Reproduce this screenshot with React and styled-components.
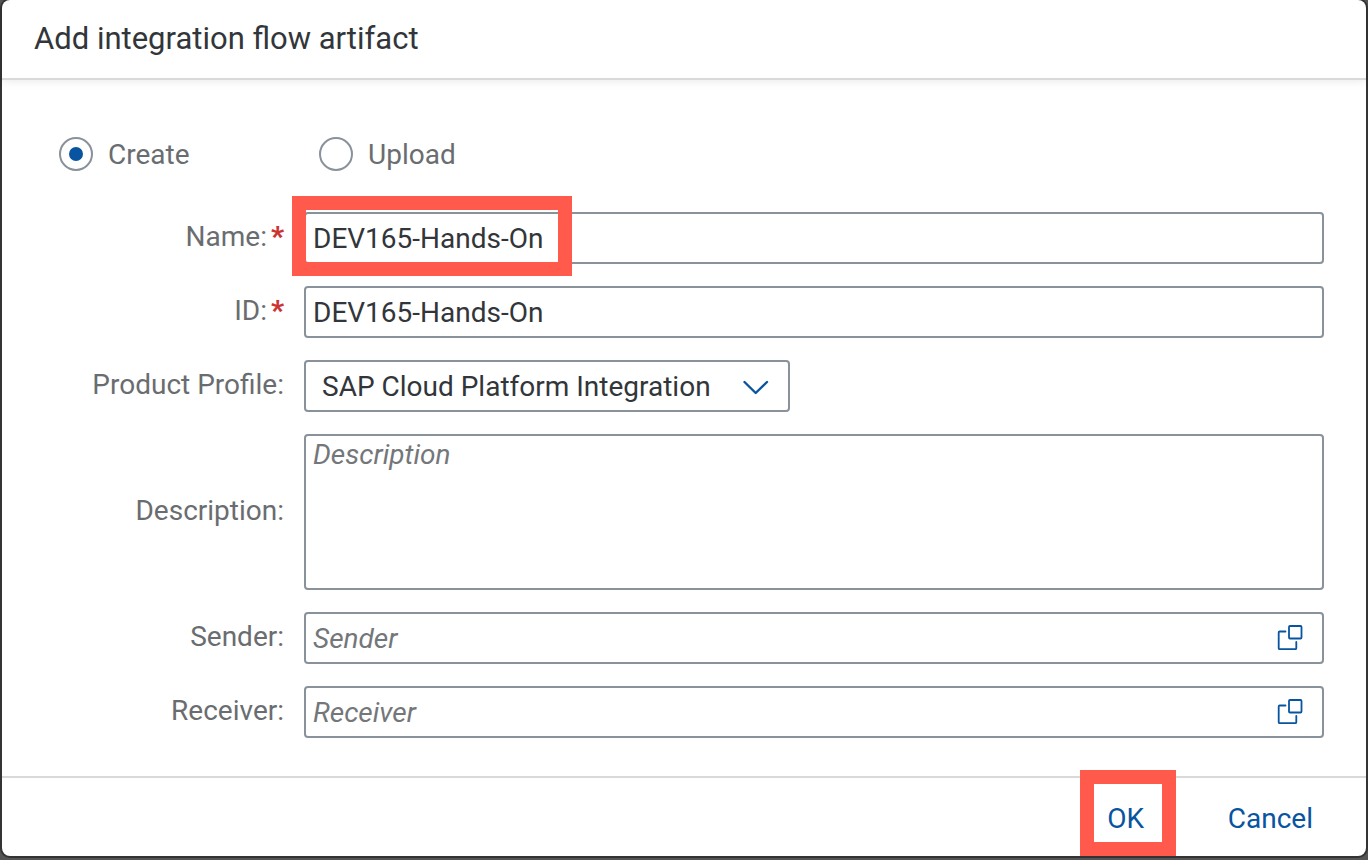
import React, { useState } from "react";
import styled, { createGlobalStyle, css } from "styled-components";

const colors = {
  text: "#32363a",
  label: "#6a6d70",
  placeholder: "#74777a",
  border: "#89919a",
  line: "#d9d9d9",
  brand: "#0854a0",
  required: "#cc3333",
  mark: "#ff5a4c",
};

const GlobalStyle = createGlobalStyle`
  *, *::before, *::after { box-sizing: border-box; }
  body {
    margin: 0;
    background: #555555;
    color: ${colors.text};
    font-family: Roboto, "Liberation Sans", sans-serif;
    font-size: 28px;
    line-height: 36px;
  }
  input, select, textarea, button { font: inherit; color: inherit; margin: 0; }
`;

const Backdrop = styled.div`
  min-height: 100vh;
  padding: 0 2px 4px;
  display: flex;
`;

const Dialog = styled.form`
  flex: 1;
  min-width: 0;
  display: flex;
  flex-direction: column;
  background: #ffffff;
  border-radius: 8px;
  box-shadow: 0 0 0 2px #333333;
`;

const Header = styled.header`
  height: 80px;
  padding: 0 32px;
  display: flex;
  align-items: center;
  border-bottom: 2px solid ${colors.line};
  box-shadow: 0 2px 8px rgba(0, 0, 0, 0.08);
`;

const Title = styled.h1`
  margin: 0;
  font-size: 31px;
  line-height: 40px;
  font-weight: 400;
`;

const Body = styled.main`
  flex: 1;
  padding: 56px 42px 38px;
`;

const labelColumns = css`
  display: grid;
  grid-template-columns: 240px minmax(0, 1fr);
  column-gap: 20px;
`;

const Modes = styled.div`
  ${labelColumns}
  margin-bottom: 40px;
`;

const Mode = styled.label`
  display: flex;
  align-items: center;
  gap: 15px;
  padding-left: 15px;
  color: ${colors.label};
`;

const Radio = styled.input.attrs({ type: "radio" })`
  appearance: none;
  width: 34px;
  height: 34px;
  border: 2px solid ${colors.border};
  border-radius: 50%;
  display: grid;
  place-items: center;
  &:checked::before {
    content: "";
    width: 14px;
    height: 14px;
    border-radius: 50%;
    background: ${colors.brand};
  }
`;

const ModeText = styled.span`
  padding-top: 2px;
  line-height: 34px;
`;

const Fields = styled.div`
  display: grid;
  gap: 22px;
`;

const Row = styled.div`
  ${labelColumns}
  align-items: center;
`;

const Label = styled.label`
  display: flex;
  justify-content: flex-end;
  padding-bottom: 2px;
  color: ${colors.label};
  white-space: nowrap;
`;

const Required = styled.span`
  padding-left: 4px;
  color: ${colors.required};
  font-family: Roboto, sans-serif;
  font-weight: 900;
`;

const Control = styled.div`
  position: relative;
  display: flex;
`;

const box = css`
  border: 2px solid ${colors.border};
  border-radius: 4px;
  background: #ffffff;
  outline: none;
  &::placeholder {
    color: ${colors.placeholder};
    font-style: italic;
    opacity: 1;
  }
`;

const TextBox = styled.input.attrs({ type: "text" })`
  ${box}
  width: 100%;
  height: 52px;
  padding: 0 ${(p) => (p.$withHelp ? 64 : 7)}px 0 7px;
`;

const TextArea = styled.textarea`
  ${box}
  width: 100%;
  height: 156px;
  padding: 1px 7px;
  resize: none;
`;

const SelectFrame = styled.div`
  position: relative;
  width: 486px;
  max-width: 100%;
`;

const Select = styled.select`
  ${box}
  appearance: none;
  width: 100%;
  height: 52px;
  padding: 1px 56px 0 16px;
`;

const Arrow = styled.svg`
  position: absolute;
  right: 20px;
  top: 18px;
  pointer-events: none;
`;

const HelpButton = styled.button.attrs({ type: "button" })`
  position: absolute;
  right: 2px;
  top: 2px;
  width: 64px;
  height: 48px;
  padding: 0;
  border: 0;
  background: none;
  display: grid;
  place-items: center;
`;

const Mark = styled.span`
  position: absolute;
  border: 14px solid ${colors.mark};
  pointer-events: none;
`;

const NameMark = styled(Mark)`
  left: -12px;
  top: -16px;
  width: 280px;
  height: 80px;
`;

const OkMark = styled(Mark)`
  inset: -8px 0 0;
`;

const Footer = styled.footer`
  height: 80px;
  padding-right: 33px;
  display: flex;
  justify-content: flex-end;
  gap: 36px;
  border-top: 2px solid ${colors.line};
`;

const Action = styled.button`
  position: relative;
  min-width: 96px;
  height: 78px;
  padding: 4px 20px 0 16px;
  border: 0;
  background: none;
  color: ${colors.brand};
`;

function ValueHelp({ label }) {
  return (
    <HelpButton aria-label={label}>
      <svg width="28" height="28" viewBox="0 0 28 28" fill="none" stroke={colors.brand} strokeWidth="1.8" strokeLinejoin="round" strokeLinecap="round" aria-hidden="true">
        <rect x="13" y="2" width="12.5" height="12.5" rx="1" />
        <path d="M9.5 7.5H3.7Q2.7 7.5 2.7 8.5V24.2Q2.7 25.2 3.7 25.2H19.3Q20.3 25.2 20.3 24.2V18" />
      </svg>
    </HelpButton>
  );
}

function Field({ id, label, required, children }) {
  return (
    <Row>
      <Label htmlFor={id}>
        {label}:{required && <Required>*</Required>}
      </Label>
      <Control>{children}</Control>
    </Row>
  );
}

export default function App() {
  const [mode, setMode] = useState("create");

  return (
    <>
      <GlobalStyle />
      <Backdrop>
        <Dialog onSubmit={(e) => e.preventDefault()}>
          <Header>
            <Title>Add integration flow artifact</Title>
          </Header>
          <Body>
            <Modes>
              <Mode>
                <Radio name="mode" checked={mode === "create"} onChange={() => setMode("create")} />
                <ModeText>Create</ModeText>
              </Mode>
              <Mode>
                <Radio name="mode" checked={mode === "upload"} onChange={() => setMode("upload")} />
                <ModeText>Upload</ModeText>
              </Mode>
            </Modes>
            <Fields>
              <Field id="name" label="Name" required>
                <TextBox id="name" defaultValue="DEV165-Hands-On" />
                <NameMark />
              </Field>
              <Field id="artifact-id" label="ID" required>
                <TextBox id="artifact-id" defaultValue="DEV165-Hands-On" />
              </Field>
              <Field id="profile" label="Product Profile">
                <SelectFrame>
                  <Select id="profile">
                    <option>SAP Cloud Platform Integration</option>
                  </Select>
                  <Arrow width="28" height="18" viewBox="0 0 28 18" fill="none" stroke={colors.brand} strokeWidth="2.4" strokeLinecap="round" strokeLinejoin="round" aria-hidden="true">
                    <path d="M2.5 4L13.7 15L25 4" />
                  </Arrow>
                </SelectFrame>
              </Field>
              <Field id="description" label="Description">
                <TextArea id="description" placeholder="Description" />
              </Field>
              <Field id="sender" label="Sender">
                <TextBox id="sender" placeholder="Sender" $withHelp />
                <ValueHelp label="Select sender" />
              </Field>
              <Field id="receiver" label="Receiver">
                <TextBox id="receiver" placeholder="Receiver" $withHelp />
                <ValueHelp label="Select receiver" />
              </Field>
            </Fields>
          </Body>
          <Footer>
            <Action type="submit">
              OK
              <OkMark />
            </Action>
            <Action type="button">Cancel</Action>
          </Footer>
        </Dialog>
      </Backdrop>
    </>
  );
}
